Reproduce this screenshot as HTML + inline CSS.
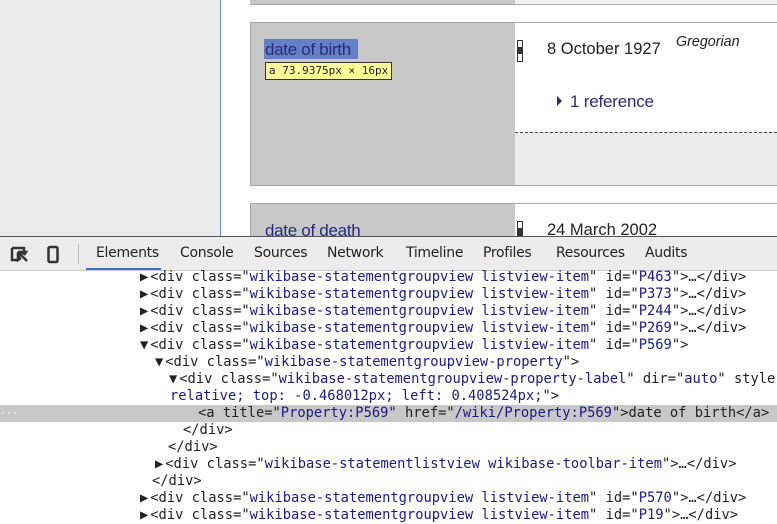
<!DOCTYPE html>
<html><head><style>
body{margin:0;width:777px;height:512px;overflow:hidden;position:relative;background:#fff;font-family:"Liberation Sans",sans-serif}
.abs{position:absolute}
.mono{font-family:"DejaVu Sans Mono",monospace;font-size:13.75px;white-space:pre;color:#222;position:absolute;line-height:17px;letter-spacing:0}
.v{color:#1a1a8a}
.tab{position:absolute;top:245px;font-family:"DejaVu Sans",sans-serif;font-size:14px;color:#222;letter-spacing:-0.3px}
</style></head><body>
<div class="abs" style="left:0;top:0;width:220px;height:237px;background:#ebebeb"></div>
<div class="abs" style="left:220px;top:0;width:1px;height:237px;background:#6b8bd0"></div>
<div class="abs" style="left:250px;top:0;width:527px;height:4px;background:#c8c8c8;border-bottom:1px solid #a8a8a8"></div>
<div class="abs" style="left:515px;top:0;width:262px;height:4px;background:#f0f0f0"></div>
<div class="abs" style="left:250px;top:22px;width:527px;height:162px;border:1px solid #a8a8a8;border-right:none;background:#c8c8c8"></div>
<div class="abs" style="left:515px;top:23px;width:262px;height:109px;background:#fff"></div>
<div class="abs" style="left:515px;top:132px;width:262px;height:52px;background:#ececec;border-top:1px dashed #444"></div>
<div class="abs" style="left:264px;top:39px;width:94px;height:20px;background:#6680c8"></div>
<div class="abs" style="left:265px;top:40px;font-size:17px;color:#2a2a7a;letter-spacing:-0.3px">date of birth</div>
<div class="abs" style="left:265px;top:62px;height:16px;padding:0 3px;background:#ffff99;border:1px solid #333;font-family:'DejaVu Sans Mono',monospace;font-size:11px;line-height:16px;color:#222;white-space:pre">a 73.9375px × 16px</div>
<div class="abs" style="left:517px;top:40px;width:6px;height:22px;background:linear-gradient(#fff 0,#fff 6px,#333 6px,#333 13px,#fff 13px);border:1px solid #333;box-sizing:border-box"></div>
<div class="abs" style="left:547px;top:40px;font-size:16.5px;color:#222">8 October 1927</div>
<div class="abs" style="left:676px;top:34px;font-size:14.3px;font-style:italic;color:#222">Gregorian</div>
<div class="abs" style="left:557px;top:96px;width:0;height:0;border-left:5px solid #2a2a7a;border-top:5px solid transparent;border-bottom:5px solid transparent"></div>
<div class="abs" style="left:570px;top:92px;font-size:17px;color:#2a2a7a;letter-spacing:-0.2px">1 reference</div>
<div class="abs" style="left:250px;top:203px;width:527px;height:40px;border:1px solid #a8a8a8;border-right:none;background:#c8c8c8"></div>
<div class="abs" style="left:515px;top:204px;width:262px;height:40px;background:#fff"></div>
<div class="abs" style="left:265px;top:221px;font-size:17px;color:#2a2a7a;letter-spacing:-0.3px">date of death</div>
<div class="abs" style="left:517px;top:221px;width:6px;height:20px;background:linear-gradient(#fff 0,#fff 6px,#333 6px);border:1px solid #333;box-sizing:border-box"></div>
<div class="abs" style="left:547px;top:221px;font-size:16.5px;color:#222">24 March 2002</div>
<div class="abs" style="left:0;top:236px;width:777px;height:1px;background:#555"></div>
<div class="abs" style="left:0;top:237px;width:777px;height:33px;background:#ececec;border-bottom:1px solid #ccc"></div>
<svg class="abs" style="left:10px;top:244px" width="60" height="22"><path d="M2 4h12v5M2 4v12h6" stroke="#333" stroke-width="2.5" fill="none"/><path d="M8 8l9 9M8 8v8l3-2M8 8h8l-2 3" stroke="#333" stroke-width="2.5" fill="#333"/><rect x="38.5" y="3" width="9" height="15" rx="1.5" stroke="#333" stroke-width="2.5" fill="none"/></svg>
<div class="abs" style="left:78px;top:244px;width:1px;height:20px;background:#bbb"></div>
<div class="abs" style="left:86px;top:268px;width:75px;height:2px;background:#3b6ed6"></div>
<div class="tab" style="left:96px">Elements</div>
<div class="tab" style="left:180px">Console</div>
<div class="tab" style="left:254px">Sources</div>
<div class="tab" style="left:327px">Network</div>
<div class="tab" style="left:406px">Timeline</div>
<div class="tab" style="left:483px">Profiles</div>
<div class="tab" style="left:556px">Resources</div>
<div class="tab" style="left:645px">Audits</div>
<div class="abs" style="left:0;top:405px;width:777px;height:17px;background:#c8c8c8"></div>
<div class="mono" style="left:0;top:405px;color:#fff;font-size:10px">···</div>
<div class="mono" style="left:140px;top:269px">▶<span style="margin-left:2px">&lt;div class="<span class="v">wikibase-statementgroupview listview-item</span>" id="<span class="v">P463</span>"&gt;…&lt;/div&gt;</span></div>
<div class="mono" style="left:140px;top:286px">▶<span style="margin-left:2px">&lt;div class="<span class="v">wikibase-statementgroupview listview-item</span>" id="<span class="v">P373</span>"&gt;…&lt;/div&gt;</span></div>
<div class="mono" style="left:140px;top:303px">▶<span style="margin-left:2px">&lt;div class="<span class="v">wikibase-statementgroupview listview-item</span>" id="<span class="v">P244</span>"&gt;…&lt;/div&gt;</span></div>
<div class="mono" style="left:140px;top:320px">▶<span style="margin-left:2px">&lt;div class="<span class="v">wikibase-statementgroupview listview-item</span>" id="<span class="v">P269</span>"&gt;…&lt;/div&gt;</span></div>
<div class="mono" style="left:140px;top:337px">▼<span style="margin-left:2px">&lt;div class="<span class="v">wikibase-statementgroupview listview-item</span>" id="<span class="v">P569</span>"&gt;</span></div>
<div class="mono" style="left:155px;top:354px">▼<span style="margin-left:2px">&lt;div class="<span class="v">wikibase-statementgroupview-property</span>"&gt;</span></div>
<div class="mono" style="left:169px;top:371px">▼<span style="margin-left:2px">&lt;div class="<span class="v">wikibase-statementgroupview-property-label</span>" dir="<span class="v">auto</span>" style</span></div>
<div class="mono v" style="left:170px;top:388px">relative; top: -0.468012px; left: 0.408524px;<span style="color:#222">"&gt;</span></div>
<div class="mono" style="left:198px;top:405px">&lt;a title="<span class="v">Property:P569</span>" href="<span class="v">/wiki/Property:P569</span>"&gt;date of birth&lt;/a&gt;</div>
<div class="mono" style="left:183px;top:422px">&lt;/div&gt;</div>
<div class="mono" style="left:168px;top:439px">&lt;/div&gt;</div>
<div class="mono" style="left:155px;top:456px">▶<span style="margin-left:2px">&lt;div class="<span class="v">wikibase-statementlistview wikibase-toolbar-item</span>"&gt;…&lt;/div&gt;</span></div>
<div class="mono" style="left:152px;top:473px">&lt;/div&gt;</div>
<div class="mono" style="left:140px;top:490px">▶<span style="margin-left:2px">&lt;div class="<span class="v">wikibase-statementgroupview listview-item</span>" id="<span class="v">P570</span>"&gt;…&lt;/div&gt;</span></div>
<div class="mono" style="left:140px;top:507px">▶<span style="margin-left:2px">&lt;div class="<span class="v">wikibase-statementgroupview listview-item</span>" id="<span class="v">P19</span>"&gt;…&lt;/div&gt;</span></div>
</body></html>
